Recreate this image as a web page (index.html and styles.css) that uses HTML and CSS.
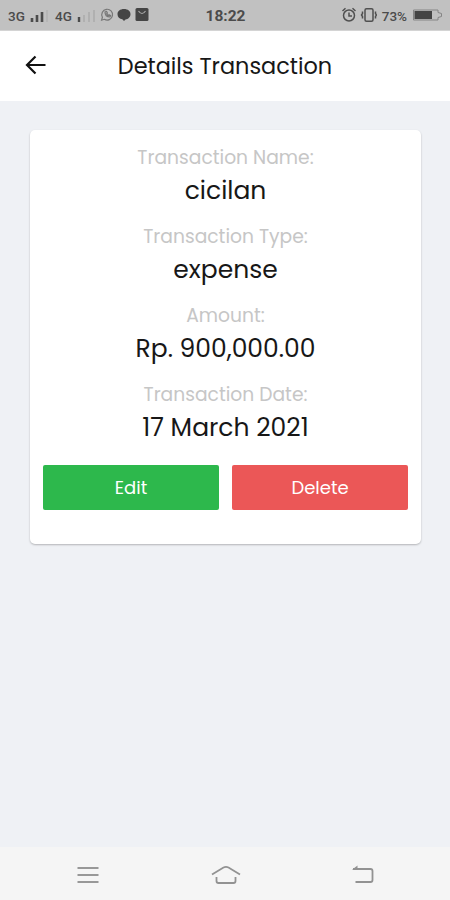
FILE: index.html
```html
<!DOCTYPE html>
<html lang="en">
<head>
  <meta charset="UTF-8">
  <meta name="viewport" content="width=device-width, initial-scale=1.0">
  <title>Details Transaction</title>
  <link rel="stylesheet" href="styles.css">
</head>
<body>
  <div class="status-bar">
    <div class="status-left">
      <span class="network">3G</span>
      <svg class="signal" width="20" height="14" viewBox="0 0 20 14">
        <path d="M2 8v4M7 5v7M12 2v10" stroke="#4b4b4b" stroke-width="2.6"/>
        <path d="M17 0v12" stroke="#b6b6b6" stroke-width="2"/>
      </svg>
      <span class="network">4G</span>
      <svg class="signal" width="20" height="14" viewBox="0 0 20 14">
        <path d="M2 7v5" stroke="#4b4b4b" stroke-width="2.4"/>
        <path d="M7 5v7M12 2v10M17 0v12" stroke="#b0b0b0" stroke-width="2"/>
      </svg>
      <svg class="app-icons" width="50" height="16" viewBox="0 0 50 16">
        <g fill="none" stroke="#777" stroke-width="1.2">
          <path d="M1.6 13.2l.8-3a5.4 5.4 0 1 1 2 2.1z"/>
          <path d="M5 5c0 3 2 5 5 5l.6-1.4-1.6-.8-.8.8-1.6-1.8.8-.7-.8-1.6z"/>
        </g>
        <path d="M24 2c4 0 6.500 2.200 6.500 5.200 0 2.800-2.300 5-5 5.200L24 14l-1.700-1.700c-2.700-.4-4.800-2.400-4.800-5.100C17.500 4.200 20 2 24 2z" fill="#454545"/>
        <rect x="35.500" y="1" width="13" height="13" rx="1.500" fill="#454545"/>
        <path d="M38.500 4q3.500 5 7 0" fill="none" stroke="#aaa" stroke-width="1.200"/>
      </svg>
    </div>
    <span class="clock">18:22</span>
    <div class="status-right">
      <svg width="36" height="16" viewBox="0 0 36 16">
        <g fill="none" stroke="#505050" stroke-width="1.500">
          <circle cx="8" cy="8.500" r="5.500"/>
          <path d="M8 5.500v3.500h3M1.500 4l3-2.700M14.500 4l-3-2.700"/>
          <rect x="24" y="1.800" width="8" height="12.500" rx="1.500"/>
          <path d="M21.500 4.500v2l-1 1.500 1 1.500v2M34.500 4.500v2l1 1.500-1 1.500v2"/>
        </g>
      </svg>
      <span class="percent">73%</span>
      <svg width="31" height="14" viewBox="0 0 31 14">
        <path d="M1.500 2h24.500v2.500l3.500 1v3l-3.500 1v2.500h-24.500z" fill="none" stroke="#858585"/>
        <rect x="2.500" y="3" width="17.500" height="8" fill="#444"/>
      </svg>
    </div>
  </div>

  <header class="header">
    <svg width="22" height="22" viewBox="0 0 22 22">
      <path d="M10.500 1.500L2 10l8.500 8.500M2 10h18.500" fill="none" stroke="#111" stroke-width="2.200"/>
    </svg>
    <h1>Details Transaction</h1>
  </header>

  <main class="content">
    <div class="card">
      <div class="item">
        <p class="label">Transaction Name:</p>
        <p class="value">cicilan</p>
      </div>
      <div class="item">
        <p class="label">Transaction Type:</p>
        <p class="value">expense</p>
      </div>
      <div class="item">
        <p class="label">Amount:</p>
        <p class="value">Rp. 900,000.00</p>
      </div>
      <div class="item">
        <p class="label">Transaction Date:</p>
        <p class="value">17 March 2021</p>
      </div>
      <div class="buttons">
        <button class="btn edit">Edit</button>
        <button class="btn delete">Delete</button>
      </div>
    </div>
  </main>

  <nav class="nav-bar">
    <svg width="22" height="20" viewBox="0 0 22 20">
      <path d="M.5 3h21M.5 10h21M.5 17h21" stroke="#989898" stroke-width="2"/>
    </svg>
    <svg width="30" height="20" viewBox="0 0 30 20">
      <path d="M1 9.500l11.500-7q2.500-1.200 5 0L29 9.500M5.500 12v4q0 2 2 2h15q2 0 2-2v-4" fill="none" stroke="#929292" stroke-width="1.800"/>
    </svg>
    <svg width="22" height="20" viewBox="0 0 22 20">
      <path d="M1 4h17.500q2 0 2 2v9q0 2-2 2H3.500" fill="none" stroke="#929292" stroke-width="1.800"/>
      <path d="M0 4.800L5.500 .5v4.300z" fill="#929292"/>
    </svg>
  </nav>
</body>
</html>
```
FILE: styles.css
```css
* {
  box-sizing: border-box;
}
body {
  margin: 0;
  height: 900px;
  display: flex;
  flex-direction: column;
  background: #eff1f5;
  color: #171717;
  font-family: 'Poppins', 'Inter', sans-serif;
  overflow: hidden;
}
h1, p {
  margin: 0;
  font-weight: 400;
}
svg {
  display: block;
  flex: none;
}
/* Status bar */
.status-bar {
  height: 31px;
  padding: 0 7px 0 8px;
  display: grid;
  grid-template-columns: 1fr auto 1fr;
  align-items: center;
  background: #c1c1c1;
  border-bottom: 1px solid #d4d4d4;
  color: #4b4b4b;
  font-family: Roboto, sans-serif;
}
.status-left, .status-right {
  display: flex;
  align-items: center;
}
.status-right {
  justify-content: flex-end;
}
.network {
  width: 19px;
  font-size: 13.5px;
  font-weight: 500;
  padding-top: 2px;
}
.signal {
  margin: 4px 5px 0 3px;
}
.status-left .signal + .app-icons {
  margin-left: -2px;
}
.clock {
  font-size: 15.5px;
  font-weight: 700;
  padding-top: 1px;
}
.percent {
  margin: 1px 5px 0 5px;
  font-size: 13.5px;
  font-weight: 500;
}
/* Header */
.header {
  height: 70px;
  padding: 0 25px;
  display: grid;
  grid-template-columns: 22px 1fr 22px;
  align-items: center;
  background: #fff;
}
.header h1 {
  font-size: 22.4px;
  text-align: center;
  white-space: nowrap;
}
/* Card */
.content {
  flex: 1;
  padding: 29px 29px 0 30px;
}
.card {
  height: 414px;
  padding: 13px 13px 0;
  background: #fff;
  border-radius: 5px;
  box-shadow: 0 1px 2px rgba(0,0,0,0.25);
  text-align: center;
}
.item {
  height: 79px;
}
.label {
  font-size: 18.7px;
  line-height: 30px;
  color: #c6c6c6;
}
.value {
  font-size: 25px;
  line-height: 36px;
}
.buttons {
  display: flex;
  gap: 13px;
  margin-top: 6px;
}
.btn {
  flex: 1;
  height: 45px;
  padding: 0;
  border: none;
  border-radius: 2px;
  color: #fff;
  font: inherit;
  font-size: 18px;
}
.edit {
  background: #2db84c;
}
.delete {
  background: #eb5757;
}
/* Bottom navigation */
.nav-bar {
  height: 53px;
  padding: 2px 76px 0 77px;
  display: flex;
  align-items: center;
  justify-content: space-between;
  background: #f5f5f5;
}
```
